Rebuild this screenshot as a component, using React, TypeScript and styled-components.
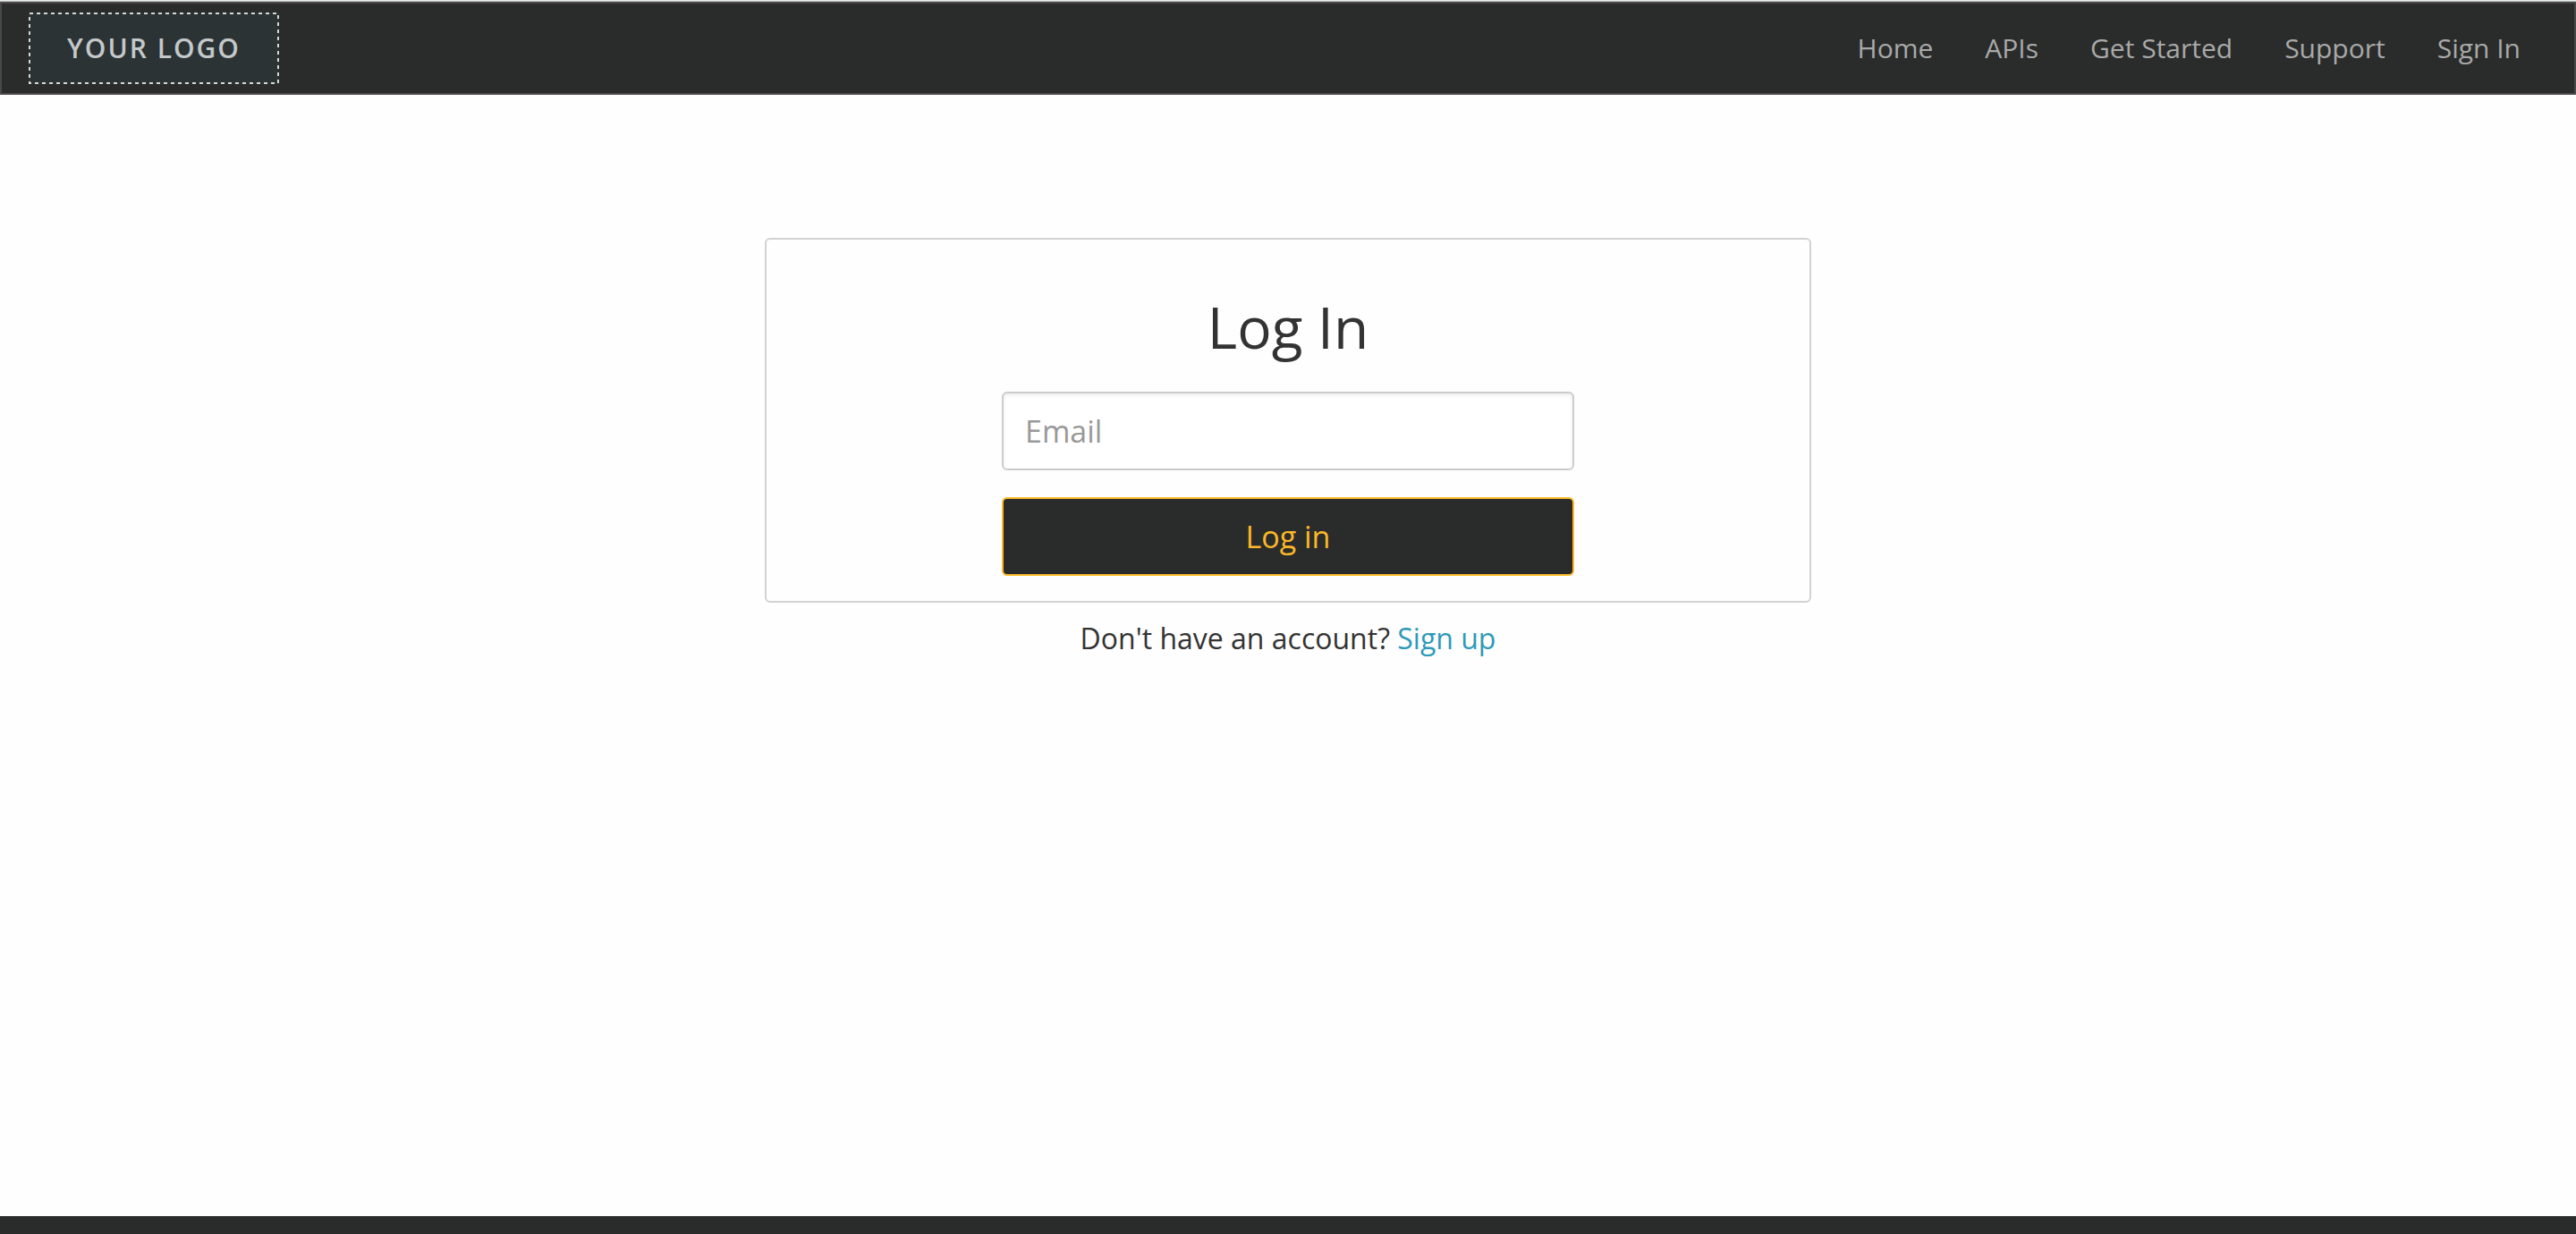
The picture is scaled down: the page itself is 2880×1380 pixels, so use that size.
import React from "react";
import styled, { createGlobalStyle } from "styled-components";

const GlobalStyle = createGlobalStyle`
  *, *::before, *::after { box-sizing: border-box; }
  body {
    margin: 0;
    background: #fefefe;
    color: #333;
    font-family: "Open Sans", "Noto Sans", sans-serif;
    font-size: 32px;
    line-height: 44px;
  }
`;

const Page = styled.div`
  display: flex;
  flex-direction: column;
  min-height: 100vh;
  border-top: 1px solid #e7ecec;
`;

const Header = styled.header`
  display: flex;
  align-items: center;
  justify-content: space-between;
  margin-top: 1px;
  padding: 10px 30px;
  background: #2a2c2b;
  border: 2px solid #4a4849;
  outline: 1px solid #b9bfbe;
  clip-path: inset(-1px 0 0 0);
`;

const Logo = styled.a`
  display: flex;
  align-items: center;
  justify-content: center;
  width: 280px;
  height: 80px;
  background: #2b3335;
  color: #c4c8c9;
  font-size: 30px;
  font-weight: 600;
  letter-spacing: 2px;
  text-decoration: none;
  position: relative;
`;

const LogoFrame = styled.svg`
  position: absolute;
  inset: 0;
  width: 100%;
  height: 100%;
`;

const Nav = styled.nav`
  display: flex;
  gap: 58px;
  padding-right: 30px;
`;

const NavLink = styled.a`
  color: #a9a9a9;
  font-size: 30px;
  text-decoration: none;
`;

const Main = styled.main`
  flex: 1;
  display: flex;
  flex-direction: column;
  align-items: center;
  padding: 160px 30px 60px;
`;

const Card = styled.form`
  display: flex;
  flex-direction: column;
  align-items: center;
  width: 100%;
  max-width: 1170px;
  padding: 56px 30px 28px;
  border: 2px solid #d2d2d2;
  border-radius: 6px;
`;

const Title = styled.h1`
  margin: 0 0 30px;
  font-size: 64px;
  line-height: 84px;
  font-weight: 400;
`;

const Fields = styled.div`
  display: flex;
  flex-direction: column;
  gap: 30px;
  width: 100%;
  max-width: 640px;
`;

const TextInput = styled.input`
  width: 100%;
  height: 88px;
  padding: 0 24px;
  border: 2px solid #ccc;
  border-radius: 6px;
  background: #fff;
  box-shadow: inset 0 2px 4px rgba(0, 0, 0, 0.075);
  color: #555;
  font: inherit;
  font-size: 34px;
  &::placeholder { color: #999; opacity: 1; }
`;

const SubmitButton = styled.button`
  width: 100%;
  height: 88px;
  padding: 0;
  border: 2px solid #fcb827;
  border-radius: 6px;
  background: #2a2c2b;
  color: #fcb827;
  font: inherit;
  font-size: 34px;
  cursor: pointer;
`;

const Prompt = styled.p`
  margin: 18px 0 0;
`;

const SignUpLink = styled.a`
  color: #2e9ab9;
  text-decoration: none;
`;

const Footer = styled.footer`
  height: 20px;
  background: #2a2c2b;
`;

const links = ["Home", "APIs", "Get Started", "Support", "Sign In"];

export default function App() {
  return (
    <>
      <GlobalStyle />
      <Page>
        <Header>
          <Logo href="#home">
            <LogoFrame aria-hidden="true">
              <rect x="1" y="1" width="278" height="78" fill="none" stroke="#d3d7d7" strokeWidth="2" strokeDasharray="4 4" />
            </LogoFrame>
            YOUR LOGO
          </Logo>
          <Nav aria-label="Main">
            {links.map((label) => (
              <NavLink key={label} href={`#${label.toLowerCase().replace(" ", "-")}`}>
                {label}
              </NavLink>
            ))}
          </Nav>
        </Header>
        <Main>
          <Card onSubmit={(event: React.FormEvent) => event.preventDefault()}>
            <Title>Log In</Title>
            <Fields>
              <TextInput type="email" placeholder="Email" aria-label="Email" />
              <SubmitButton type="submit">Log in</SubmitButton>
            </Fields>
          </Card>
          <Prompt>
            Don't have an account? <SignUpLink href="#sign-up">Sign up</SignUpLink>
          </Prompt>
        </Main>
        <Footer />
      </Page>
    </>
  );
}
